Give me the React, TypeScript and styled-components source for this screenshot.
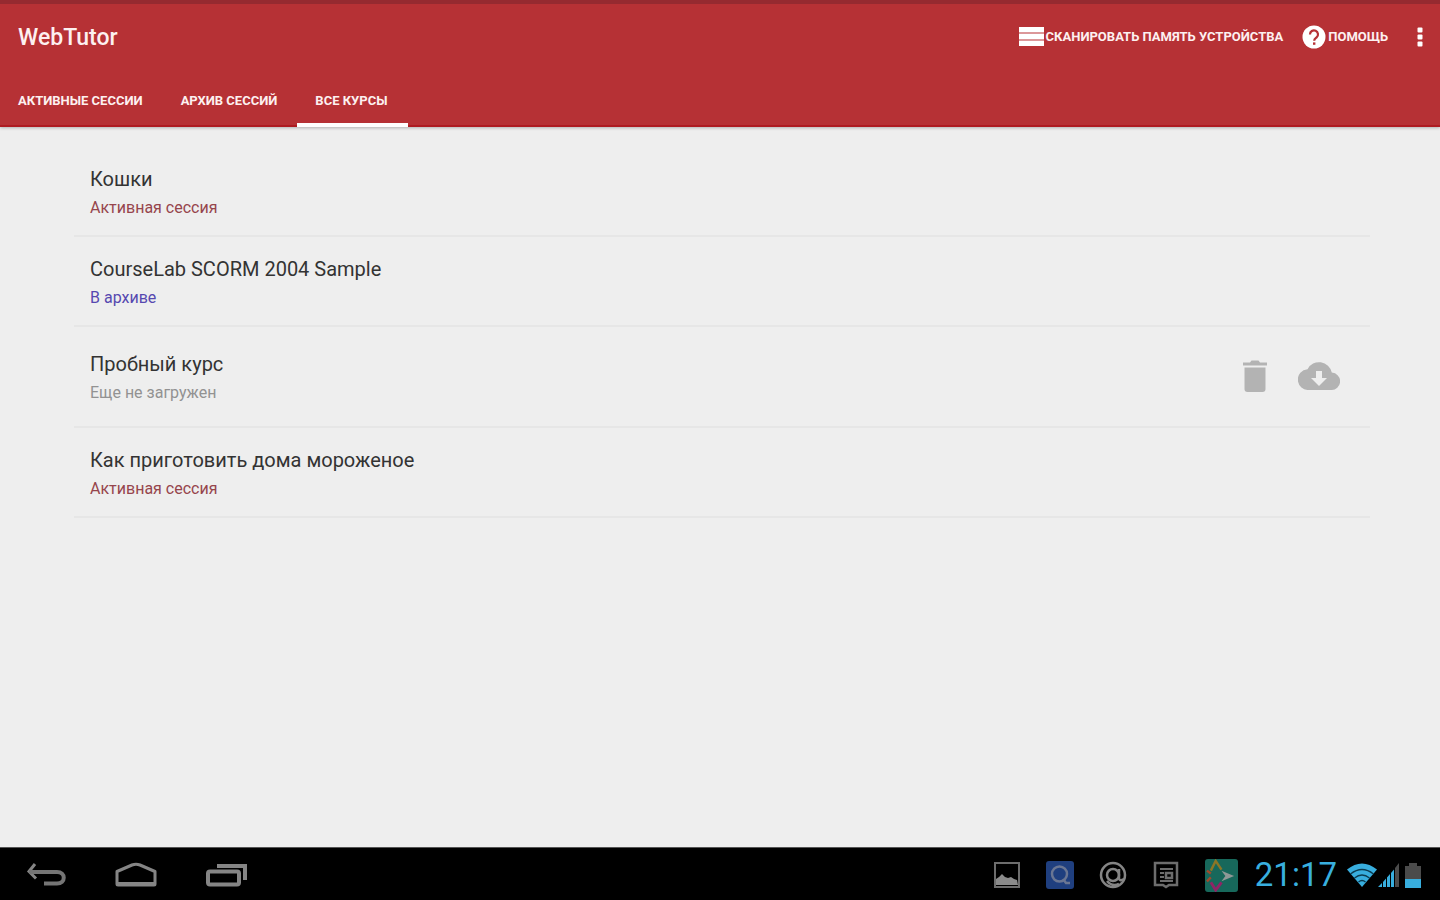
import React from 'react';
import styled, { createGlobalStyle } from 'styled-components';

const GlobalStyle = createGlobalStyle`
  *, *::before, *::after { box-sizing: border-box; }
  body {
    margin: 0;
    background: #eeeeee;
    font-family: Roboto, "Liberation Sans", sans-serif;
  }
  button {
    border: 0;
    padding: 0;
    background: none;
    color: inherit;
    font: inherit;
    cursor: pointer;
  }
  svg { display: block; flex: none; }
`;

const Screen = styled.div`
  display: flex;
  flex-direction: column;
  min-height: 100vh;
`;

const Header = styled.header`
  background: #b63135;
  color: #fdf0f0;
  border-top: 4px solid #952a30;
  border-bottom: 2px solid #ae1b21;
  box-shadow: 0 1px 3px rgba(0, 0, 0, 0.25);
`;

const AppBar = styled.div`
  display: flex;
  align-items: center;
  justify-content: space-between;
  height: 66px;
  padding: 0 7px 0 18px;
`;

const AppTitle = styled.h1`
  margin: 0;
  padding-top: 2px;
  font-size: 23px;
  line-height: 32px;
  font-weight: 500;
`;

const Actions = styled.div`
  display: flex;
  align-items: center;
  gap: 19px;
`;

const ActionButton = styled.button`
  display: flex;
  align-items: center;
  gap: 2px;
  font-size: 13px;
  line-height: 24px;
  font-weight: 700;
  text-transform: uppercase;
  white-space: nowrap;
`;

const Tabs = styled.nav`
  display: flex;
  height: 55px;
`;

const Tab = styled.button<{ $active?: boolean }>`
  position: relative;
  padding: 6px 20px 0 18px;
  font-size: 13px;
  line-height: 20px;
  font-weight: 700;
  text-transform: uppercase;
  white-space: nowrap;

  &::after {
    content: "";
    display: ${({ $active }) => ($active ? 'block' : 'none')};
    position: absolute;
    left: 0;
    right: 0;
    bottom: -2px;
    height: 4px;
    background: #ffffff;
  }
`;

const Main = styled.main`
  flex: 1;
  padding: 20px 70px 0 74px;
`;

const CourseList = styled.ul`
  margin: 0;
  padding: 0;
  list-style: none;
`;

const CourseRow = styled.li<{ $tall?: boolean }>`
  display: flex;
  align-items: center;
  justify-content: space-between;
  height: ${({ $tall }) => ($tall ? 101 : 90)}px;
  padding: 5px 30px 0 16px;
  border-bottom: 2px solid #e6e6e6;
`;

const CourseTitle = styled.h2`
  margin: 0;
  font-size: 20px;
  line-height: 28px;
  font-weight: 400;
  color: #333333;
`;

const CourseStatus = styled.p<{ $color: string }>`
  margin: 0;
  font-size: 16px;
  line-height: 30px;
  color: ${({ $color }) => $color};
`;

const RowActions = styled.div`
  display: flex;
  align-items: center;
  gap: 30px;
  padding-bottom: 6px;
  color: #b3b3b3;
`;

const SystemBar = styled.footer`
  display: flex;
  align-items: center;
  justify-content: space-between;
  height: 53px;
  padding: 2px 19px 0 25px;
  background: #000000;
  border-top: 1px solid #555555;
`;

const SystemKeys = styled.div`
  display: flex;
  align-items: center;
  gap: 47px;
  color: #858585;
`;

const Tray = styled.div`
  display: flex;
  align-items: center;
  gap: 17px;
  color: #6d6d6d;
`;

const Notifications = styled.div`
  display: flex;
  align-items: center;
  gap: 25px;
`;

const StatusGroup = styled.div`
  display: flex;
  align-items: center;
  gap: 10px;
  color: #38aede;
`;

const Clock = styled.time`
  font-size: 33px;
  line-height: 40px;
`;

const Connectivity = styled.div`
  display: flex;
  align-items: center;
  gap: 1px;
`;

const BatteryLevel = styled.div`
  margin-left: 5px;
`;

const ACTIVE = '#96454c';
const ARCHIVED = '#5648b0';
const PENDING = '#929292';

const courses = [
  { title: 'Кошки', status: 'Активная сессия', color: ACTIVE },
  { title: 'CourseLab SCORM 2004 Sample', status: 'В архиве', color: ARCHIVED },
  { title: 'Пробный курс', status: 'Еще не загружен', color: PENDING, pending: true },
  { title: 'Как приготовить дома мороженое', status: 'Активная сессия', color: ACTIVE },
];

const StorageIcon = () => (
  <svg width="25" height="20" viewBox="0 0 25 20" fill="#fff">
    <path d="M0 6h25M0 13h25" stroke="#dc9799" strokeWidth="3" />
    <rect y="0" width="25" height="5" />
    <rect y="7" width="25" height="5" />
    <rect y="14" width="25" height="5" />
  </svg>
);

const HelpIcon = () => (
  <svg width="24" height="24" viewBox="0 0 24 24">
    <circle cx="12" cy="12" r="11.5" fill="#fff" />
    <path d="M8 9.4a4 4 0 1 1 6.6 3c-1.4 1.2-2.4 1.7-2.4 3.3" fill="none" stroke="#b63135" strokeWidth="2.2" />
    <rect x="11" y="17.4" width="2.4" height="2.4" fill="#b63135" />
  </svg>
);

const MoreIcon = () => (
  <svg width="26" height="24" viewBox="0 0 26 24" fill="#fff">
    <rect x="10.5" y="2.5" width="5" height="5" rx="1" />
    <rect x="10.5" y="9.5" width="5" height="5" rx="1" />
    <rect x="10.5" y="16.5" width="5" height="5" rx="1" />
  </svg>
);

const TrashIcon = () => (
  <svg width="26" height="32" viewBox="0 0 26 32" fill="currentColor">
    <path d="M1 2.5h7L9.5 .5h7l1.500 2h7v3H1z" />
    <path d="M2.500 7.500h21V29a3 3 0 0 1-3 3h-15a3 3 0 0 1-3-3z" />
  </svg>
);

const CloudIcon = () => (
  <svg width="42" height="28" viewBox="0 0 42 28">
    <path d="M33.800 10.600A13 13 0 0 0 9.500 7.200 10.400 10.400 0 0 0 11 28h22a8.700 8.700 0 0 0 .8-17.400z" fill="currentColor" />
    <path d="M18 9h6v7h5l-8 8-8-8h5z" fill="#eeeeee" />
  </svg>
);

const BackIcon = () => (
  <svg width="42" height="26" viewBox="0 0 42 26" fill="none" stroke="currentColor" strokeWidth="3">
    <path d="M10 2 4 9.500l7 7" />
    <path d="M4 10h28c9 0 9 11.500 0 11.500H19" strokeWidth="4" stroke="#757575" />
  </svg>
);

const HomeIcon = () => (
  <svg width="44" height="26" viewBox="0 0 44 26" fill="none" stroke="currentColor" strokeWidth="3" strokeLinejoin="round">
    <path d="M3 9.500 18 3q4-1.600 8 0l15 6.500V22a1 1 0 0 1-1 1H4a1 1 0 0 1-1-1z" />
    <path d="M3 22h38" strokeWidth="4" />
  </svg>
);

const RecentIcon = () => (
  <svg width="42" height="26" viewBox="0 0 42 26" fill="none" stroke="currentColor" strokeWidth="4">
    <rect x="3" y="9.500" width="31" height="13" rx="2" />
    <path d="M12 4h28v14" />
  </svg>
);

const PictureIcon = () => (
  <svg width="28" height="28" viewBox="0 0 28 28">
    <rect x="2" y="2" width="24" height="24" fill="none" stroke="currentColor" strokeWidth="2" />
    <path d="M3 24v-6l3-2 3-3 3 3 3 1 3-1 3 2 3 1 1 5z" fill="#8b8b8b" />
  </svg>
);

const SearchAppIcon = () => (
  <svg width="28" height="28" viewBox="0 0 28 28">
    <rect width="28" height="28" rx="3" fill="#1f3f7f" />
    <circle cx="13.500" cy="13" r="7.500" fill="none" stroke="#6a7693" strokeWidth="2.500" />
    <path d="m17 18 3 4h4" fill="none" stroke="#6a7693" strokeWidth="2.500" />
  </svg>
);

const MailIcon = () => (
  <svg width="28" height="28" viewBox="0 0 28 28" fill="none" stroke="#858585" strokeWidth="2.500">
    <circle cx="14" cy="14" r="12" />
    <circle cx="14" cy="14" r="6" />
    <path d="M20 8v9q0 4 5 1M8 20q5 6 12 3" />
  </svg>
);

const NewsIcon = () => (
  <svg width="28" height="28" viewBox="0 0 28 28" fill="none" stroke="currentColor" strokeWidth="2.500">
    <path d="M3 2h22v22h-8l-3 2-3-2H3z" />
    <path d="M8 8h13M8 12h4M8 16h4M8 20h13" strokeWidth="2" />
    <rect x="14" y="12" width="6" height="5" />
  </svg>
);

const LauncherIcon = () => (
  <svg width="33" height="33" viewBox="0 0 34 34" fill="none">
    <rect width="34" height="34" rx="3" fill="#17685b" />
    <path d="M6 12 11 2l6 9" stroke="#8c7626" strokeWidth="2.500" />
    <path d="m2 12 4 3M2 23l4-4" stroke="#a04a2c" strokeWidth="2.500" />
    <path d="m6 24 5 8 6-8" stroke="#8f2466" strokeWidth="3" />
    <path d="m17 12 13 5.500L17 23l4-5.500z" fill="#8f9896" />
  </svg>
);

const WifiIcon = () => (
  <svg width="30" height="24" viewBox="0 0 30 24">
    <path d="M0 6.500q15-12 30 0L15 24z" fill="currentColor" />
    <path d="M3.500 11q11.500-9 23 0M7.500 15q7.500-6 15 0M11.500 19q3.500-3 7 0" fill="none" stroke="#0b3b50" strokeWidth="1.300" />
  </svg>
);

const SignalIcon = () => (
  <svg width="21" height="24" viewBox="0 0 21 24">
    <path d="M0 24 4 20v4zM5 19l3-3.500V24H5zM9 14.500l3-3.500v13H9zM13 10l3-3.500V24h-3z" fill="currentColor" />
    <path d="m17 5 4-5v24h-4z" fill="#4b4b4b" />
  </svg>
);

const BatteryIcon = () => (
  <svg width="16" height="25" viewBox="0 0 16 25">
    <path d="M0 3h4V0h8v3h4v13H0z" fill="#4b4b4b" />
    <rect y="16" width="16" height="9" fill="currentColor" />
  </svg>
);

export default function App() {
  return (
    <Screen>
      <GlobalStyle />
      <Header>
        <AppBar>
          <AppTitle>WebTutor</AppTitle>
          <Actions>
            <ActionButton type="button"><StorageIcon />Сканировать память устройства</ActionButton>
            <ActionButton type="button"><HelpIcon />Помощь</ActionButton>
            <ActionButton type="button" aria-label="Меню"><MoreIcon /></ActionButton>
          </Actions>
        </AppBar>
        <Tabs>
          <Tab type="button">Активные сессии</Tab>
          <Tab type="button">Архив сессий</Tab>
          <Tab type="button" $active aria-current="page">Все курсы</Tab>
        </Tabs>
      </Header>
      <Main>
        <CourseList>
          {courses.map((course) => (
            <CourseRow key={course.title} $tall={course.pending}>
              <div>
                <CourseTitle>{course.title}</CourseTitle>
                <CourseStatus $color={course.color}>{course.status}</CourseStatus>
              </div>
              {course.pending && (
                <RowActions>
                  <button type="button" aria-label="Удалить"><TrashIcon /></button>
                  <button type="button" aria-label="Загрузить"><CloudIcon /></button>
                </RowActions>
              )}
            </CourseRow>
          ))}
        </CourseList>
      </Main>
      <SystemBar>
        <SystemKeys>
          <button type="button" aria-label="Назад"><BackIcon /></button>
          <button type="button" aria-label="Домой"><HomeIcon /></button>
          <button type="button" aria-label="Недавние"><RecentIcon /></button>
        </SystemKeys>
        <Tray>
          <Notifications>
            <PictureIcon />
            <SearchAppIcon />
            <MailIcon />
            <NewsIcon />
            <LauncherIcon />
          </Notifications>
          <StatusGroup>
            <Clock>21:17</Clock>
            <Connectivity>
              <WifiIcon />
              <SignalIcon />
              <BatteryLevel><BatteryIcon /></BatteryLevel>
            </Connectivity>
          </StatusGroup>
        </Tray>
      </SystemBar>
    </Screen>
  );
}
